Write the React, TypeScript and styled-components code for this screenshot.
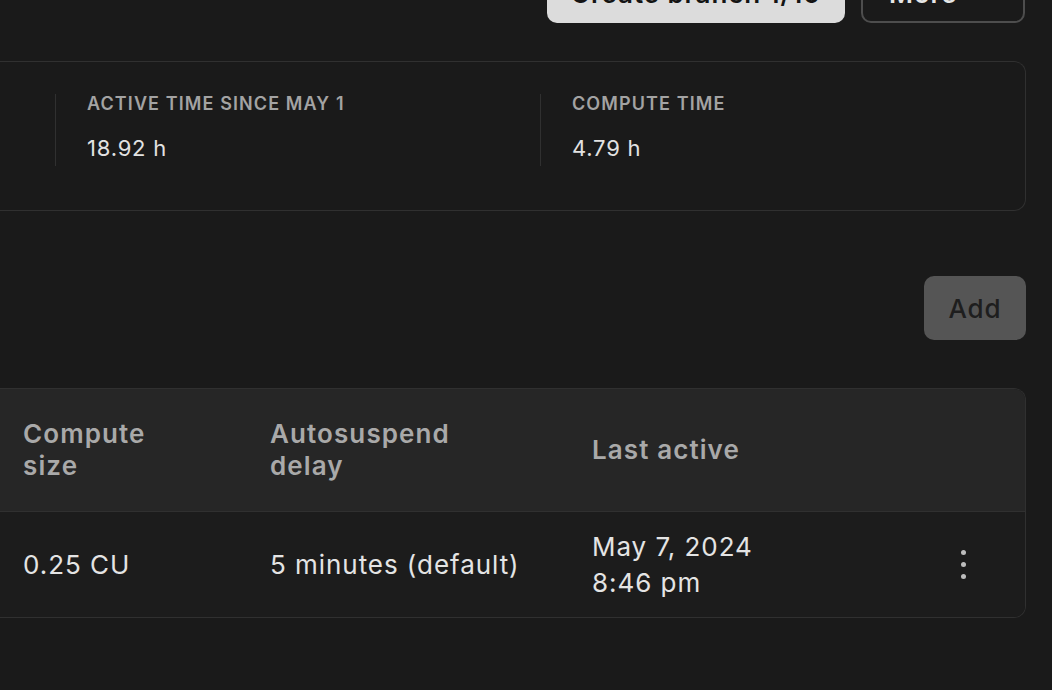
import React from "react";
import styled, { createGlobalStyle } from "styled-components";
import { ChevronDown } from "lucide-react";

const GlobalStyle = createGlobalStyle`
    html, body {
        margin: 0;
        padding: 0;
        background: #1a1a1a;
    }
    body {
        font-family: Inter, "Noto Sans", sans-serif;
        -webkit-font-smoothing: antialiased;
    }
`;

const Page = styled.div`
    min-height: 100vh;
    background: #1a1a1a;
    overflow: hidden;
    padding-right: 26px;
    box-sizing: border-box;
    display: flex;
    flex-direction: column;
`;

const TopBar = styled.div`
    display: flex;
    justify-content: flex-end;
    gap: 16px;
    margin-top: -37px;
    margin-right: 1px;
`;

const PrimaryButton = styled.button`
    height: 60px;
    width: 298px;
    padding: 0;
    border: none;
    border-radius: 10px;
    background: #dcdcdc;
    color: #141414;
    font-family: inherit;
    font-size: 26px;
    font-weight: 600;
    letter-spacing: 0.9px;
    cursor: pointer;
`;

const OutlineButton = styled.button`
    height: 60px;
    width: 164px;
    padding: 0 24px 0 26px;
    border: 2px solid #4d4d4d;
    border-radius: 10px;
    background: transparent;
    color: #e6e6e6;
    font-family: inherit;
    font-size: 26px;
    font-weight: 600;
    letter-spacing: 0.9px;
    display: flex;
    align-items: center;
    justify-content: space-between;
    cursor: pointer;
`;

const Card = styled.section`
    border: 1.5px solid #303030;
    border-left: none;
    border-radius: 0 12px 12px 0;
    background: #1a1a1a;
`;

const StatsCard = styled(Card)`
    margin-top: 38px;
    padding: 32px 0 44px 55px;
    display: grid;
    grid-template-columns: 485px 1fr;
`;

const Stat = styled.div`
    border-left: 1.5px solid #303030;
    padding-left: 31px;
    min-height: 72px;
    display: flex;
    flex-direction: column;
    gap: 19px;
`;

const StatLabel = styled.div`
    font-size: 18px;
    line-height: 20px;
    font-weight: 600;
    letter-spacing: 1.1px;
    color: #a3a3a3;
    text-transform: uppercase;
`;

const StatValue = styled.div`
    font-size: 22px;
    line-height: 30px;
    letter-spacing: 0.8px;
    color: #e2e2e2;
`;

const Actions = styled.div`
    display: flex;
    justify-content: flex-end;
    margin-top: 65px;
`;

const AddButton = styled.button`
    width: 102px;
    height: 64px;
    border: none;
    border-radius: 10px;
    background: #555555;
    color: #1e1e1e;
    font-family: inherit;
    font-size: 26px;
    font-weight: 500;
    letter-spacing: 0.9px;
    cursor: not-allowed;
`;

const TableCard = styled(Card)`
    margin-top: 48px;
    overflow: hidden;
`;

const Row = styled.div<{ $head?: boolean }>`
    display: grid;
    grid-template-columns: 247px 322px 1fr 124px;
    align-items: center;
    height: ${p => (p.$head ? "122px" : "105px")};
    background: ${p => (p.$head ? "#262626" : "#1c1c1c")};
    border-bottom: ${p => (p.$head ? "1.5px solid #303030" : "none")};
    color: ${p => (p.$head ? "#a9a9a9" : "#e4e4e4")};
    font-size: 26px;
    font-weight: ${p => (p.$head ? 600 : 400)};
    letter-spacing: ${p => (p.$head ? "1.1px" : "0.95px")};
    line-height: ${p => (p.$head ? "32px" : "36px")};
`;

const Cell = styled.div<{ $center?: boolean }>`
    padding: 0 23px;
    display: flex;
    justify-content: ${p => (p.$center ? "center" : "flex-start")};
`;

const MenuDots = styled.button`
    background: none;
    border: none;
    padding: 4px;
    display: flex;
    flex-direction: column;
    gap: 7px;
    cursor: pointer;
    span {
        width: 5px;
        height: 5px;
        border-radius: 50%;
        background: #bdbdbd;
    }
`;

const App = () => {
    return (
        <>
            <GlobalStyle />
            <Page>
                <TopBar>
                    <PrimaryButton>Create branch 1/10</PrimaryButton>
                    <OutlineButton>
                        More
                        <ChevronDown size={20} />
                    </OutlineButton>
                </TopBar>

                <StatsCard>
                    <Stat>
                        <StatLabel>Active time since May 1</StatLabel>
                        <StatValue>18.92 h</StatValue>
                    </Stat>
                    <Stat>
                        <StatLabel>Compute time</StatLabel>
                        <StatValue>4.79 h</StatValue>
                    </Stat>
                </StatsCard>

                <Actions>
                    <AddButton disabled>Add</AddButton>
                </Actions>

                <TableCard>
                    <Row $head>
                        <Cell>Compute<br />size</Cell>
                        <Cell>Autosuspend<br />delay</Cell>
                        <Cell>Last active</Cell>
                        <Cell />
                    </Row>
                    <Row>
                        <Cell>0.25 CU</Cell>
                        <Cell>5 minutes (default)</Cell>
                        <Cell>May 7, 2024<br />8:46 pm</Cell>
                        <Cell $center>
                            <MenuDots aria-label="Compute actions">
                                <span />
                                <span />
                                <span />
                            </MenuDots>
                        </Cell>
                    </Row>
                </TableCard>
            </Page>
        </>
    );
};

export default App;
